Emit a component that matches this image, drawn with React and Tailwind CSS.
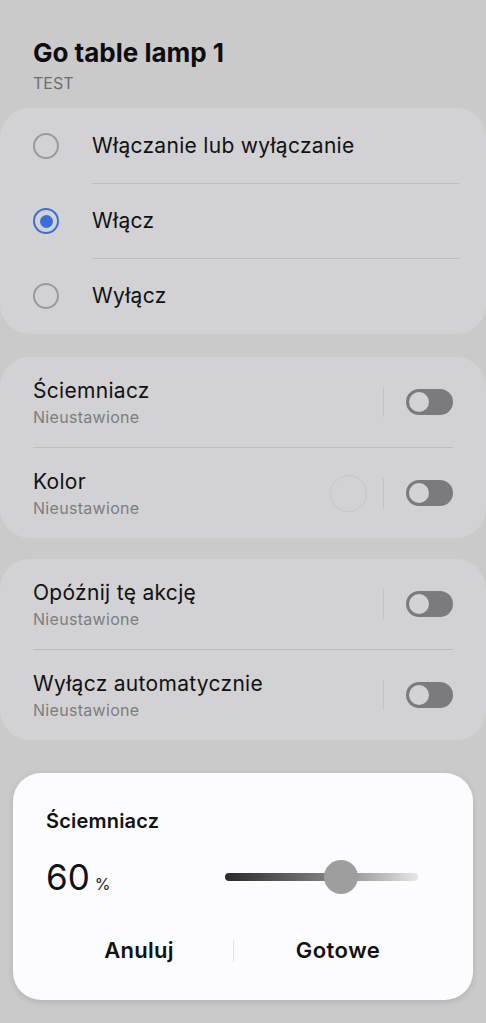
import React from "react";

function Toggle() {
  return (
    <div className="w-[47px] h-[26px] rounded-full bg-[#7b7b7d] flex items-center px-[3px]">
      <div className="w-[20px] h-[20px] rounded-full bg-[#d3d3d5]" />
    </div>
  );
}

function Radio({ checked }) {
  return checked ? (
    <div className="w-[26px] h-[26px] rounded-full border-[2.5px] border-[#3a6fd8] flex items-center justify-center">
      <div className="w-[13px] h-[13px] rounded-full bg-[#3a6fd8]" />
    </div>
  ) : (
    <div className="w-[26px] h-[26px] rounded-full border-[2px] border-[#9a9a9c]" />
  );
}

function SettingRow({ title, extra }) {
  return (
    <div className="flex items-center h-[90px] pl-[33px] pr-[33px]">
      <div className="flex-1 flex flex-col">
        <div className="text-[21px] leading-[26px] tracking-[0.3px] text-[#111]">{title}</div>
        <div className="text-[16px] leading-[20px] tracking-[0.3px] text-[#7d7d80] mt-[3px]">Nieustawione</div>
      </div>
      {extra}
      <div className="w-[1px] h-[30px] bg-[#c2c2c4] ml-[16px] mr-[22px]" />
      <Toggle />
    </div>
  );
}

export default function App() {
  const font = { fontFamily: "Inter, 'Noto Sans', sans-serif" };
  return (
    <div className="w-[486px] h-[1023px] bg-[#cacaca] overflow-hidden flex flex-col" style={font}>
      <div className="pl-[33px] pt-[37px]">
        <div className="text-[26px] leading-[32px] font-bold text-[#0d0d0d]">Go table lamp 1</div>
        <div className="text-[16px] leading-[20px] text-[#6e6e70] mt-[4px]">TEST</div>
      </div>

      <div className="mt-[15px] mx-[0px] rounded-[30px] bg-[#d2d2d4] py-[1px]">
        {[
          ["Włączanie lub wyłączanie", false],
          ["Włącz", true],
          ["Wyłącz", false],
        ].map(([t, c], i) => (
          <div key={t}>
            {i > 0 && <div className="ml-[92px] mr-[27px] h-[1px] bg-[#bdbdbf]" />}
            <div className="flex items-center h-[74px] pl-[33px]">
              <Radio checked={c} />
              <div className="ml-[33px] text-[21px] tracking-[0.3px] text-[#111]">{t}</div>
            </div>
          </div>
        ))}
      </div>

      <div className="mt-[23px] rounded-[30px] bg-[#d2d2d4]">
        <SettingRow title="Ściemniacz" />
        <div className="mx-[33px] h-[1px] bg-[#bdbdbf]" />
        <SettingRow
          title="Kolor"
          extra={<div className="w-[37px] h-[37px] rounded-full border border-[#c6c6c8]" />}
        />
      </div>

      <div className="mt-[21px] rounded-[30px] bg-[#d2d2d4]">
        <SettingRow title="Opóźnij tę akcję" />
        <div className="mx-[33px] h-[1px] bg-[#bdbdbf]" />
        <SettingRow title="Wyłącz automatycznie" />
      </div>

      <div className="mt-[33px] mx-[13px] rounded-[28px] bg-[#fcfcfe] h-[227px] shadow-[0_2px_6px_rgba(0,0,0,0.12)] flex flex-col px-[33px]">
        <div className="mt-[36px] text-[20px] leading-[24px] tracking-[0.2px] font-semibold text-[#111]">Ściemniacz</div>
        <div className="flex items-center mt-[22px] h-[44px]">
          <div className="flex items-baseline w-[179px]">
            <span className="text-[35px] leading-[40px] text-[#111]">60</span>
            <span className="text-[16px] ml-[5px] text-[#222]">%</span>
          </div>
          <div className="relative w-[193px] h-[34px] flex items-center">
            <div className="w-full h-[8px] rounded-full bg-[linear-gradient(to_right,#2b2b2b,#8a8a8a_60%,#e6e6e6)]" />
            <div className="absolute left-[99px] top-0 w-[34px] h-[34px] rounded-full bg-[#9e9e9e]" />
          </div>
        </div>
        <div className="flex items-center mt-[35px] -mx-[33px]">
          <div className="w-[220px] text-center text-[22px] tracking-[0.3px] font-semibold text-[#111] pl-[32px]">Anuluj</div>
          <div className="w-[1px] h-[22px] bg-[#e2e2e4]" />
          <div className="w-[208px] text-center text-[22px] tracking-[0.5px] font-semibold text-[#111]">Gotowe</div>
        </div>
      </div>
    </div>
  );
}
